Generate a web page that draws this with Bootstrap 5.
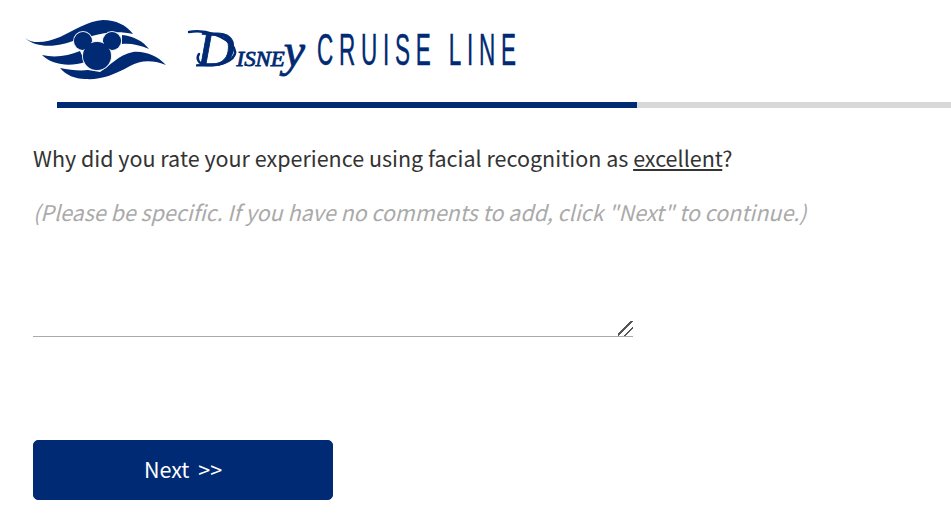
<!DOCTYPE html>
<html lang="en">
<head>
<meta charset="utf-8">
<title>Survey</title>
<link href="https://cdn.jsdelivr.net/npm/bootstrap@5.3.0/dist/css/bootstrap.min.css" rel="stylesheet">
<style>
html,body{height:100%;overflow:hidden}
body{font-family:"Noto Sans CJK JP","Noto Sans",sans-serif;color:#333;background:#fff}
.brand-head{height:102px}
.brand-svg{display:block}
.word-disney{font-family:"Liberation Serif",serif;font-style:italic;font-size:25px;font-weight:700;fill:#002a73;stroke:#002a73;stroke-width:.8}
.word-disney .cap{font-size:50px;font-weight:400}
.word-disney .rest{font-variant:small-caps;font-size:32px;font-weight:400}
.word-disney .tail{font-size:46px;font-weight:400}
.word-line{font-family:"Liberation Sans",sans-serif;font-size:45px;fill:#002a73;stroke:#002a73;stroke-width:.5}
.swash{fill:none;stroke:#002a73;stroke-width:2.4;stroke-linecap:round}
.prog-track{height:6px;margin-left:57px;background:#d8d8d8;border-radius:0}
.prog-fill{background:#002a73}
.survey-body{padding:0 33px}
.question{font-size:21.5px;line-height:30px;margin:35px 0 0}
.hint{font-size:21.5px;line-height:30px;margin:24px 0 0;color:#aaa;font-style:italic}
.answer{display:block;width:600px;height:110px;margin-top:0;padding:0;border:0;border-bottom:1px solid #aaa;border-radius:0;font-size:21.5px;line-height:30px;font-family:inherit;color:#333;outline:0;box-shadow:none}
.answer:focus{box-shadow:none;border-color:#aaa}
.answer::-webkit-resizer{background:linear-gradient(135deg,transparent 0 9px,#555 9px 10.8px,transparent 10.8px 14.3px,#555 14.3px 16.1px,transparent 16.1px)}
.next-btn{width:300px;height:60px;margin-top:103px;padding-bottom:8px;background:#002a73;border-color:#002a73;color:#fff;font-size:21.5px;border-radius:5px}
.next-btn:hover{background:#002a73;border-color:#002a73;color:#fff}
.next-btn span{margin-left:4px}
</style>
</head>
<body>
<header class="brand-head">
<svg class="brand-svg" width="560" height="102" viewBox="0 0 560 102" role="img" aria-label="Disney Cruise Line">
<g fill="#002a73">
<path d="M25 38 C34 45 47 42 60 37 C75 30 88 21 103 20 C116 20 126 25 133 34 C120 31 105 32 92 36 L75 40 C62 46 38 50 25 38Z"/>
<path d="M122 35 C133 36 143 41 149 49 C140 45 130 43 122 44Z"/>
<path d="M42 55 C55 58 68 56 80 51 L85 62 C70 67 52 65 42 55Z"/>
<path d="M60 68 C70 70 80 71 88 70 L100 72 C110 66 118 55 133 52 C146 51 157 56 166 65 C150 59 140 61 130 66 C112 76 100 80 85 79 C75 79 66 75 60 68Z"/>
</g>
<g fill="#002a73" stroke="#e6eaf2" stroke-width="2" paint-order="stroke">
<circle cx="83" cy="41" r="9"/>
<circle cx="112" cy="41" r="9"/>
<circle cx="97" cy="56" r="14"/>
</g>
<g fill="#002a73"><circle cx="83" cy="41" r="8.5"/><circle cx="112" cy="41" r="8.5"/><circle cx="97" cy="56" r="13.5"/></g>
<path class="swash" d="M189 32 C205 29 226 36 234 48 C239 58 225 66 206 65 C198 64 196 58 199 54"/>
<text class="word-disney" x="197" y="66" textLength="108" lengthAdjust="spacingAndGlyphs"><tspan class="cap">D</tspan><tspan class="rest" dx="2">isne</tspan><tspan class="tail" dx="-1">y</tspan></text>
<text class="word-line" transform="translate(317 65) scale(.5 1)" textLength="398" lengthAdjust="spacing">CRUISE LINE</text>
</svg>
</header>
<div class="progress prog-track" role="progressbar" aria-valuenow="65" aria-valuemin="0" aria-valuemax="100">
<div class="progress-bar prog-fill" style="width:580px"></div>
</div>
<main class="survey-body">
<p class="question">Why did you rate your experience using facial recognition as <u>excellent</u>?</p>
<p class="hint">(Please be specific. If you have no comments to add, click "Next" to continue.)</p>
<textarea class="form-control answer" aria-label="Comments"></textarea>
<button type="button" class="btn btn-primary next-btn d-block">Next <span>&gt;&gt;</span></button>
</main>
<script src="https://cdn.jsdelivr.net/npm/bootstrap@5.3.0/dist/js/bootstrap.bundle.min.js"></script>
</body>
</html>
